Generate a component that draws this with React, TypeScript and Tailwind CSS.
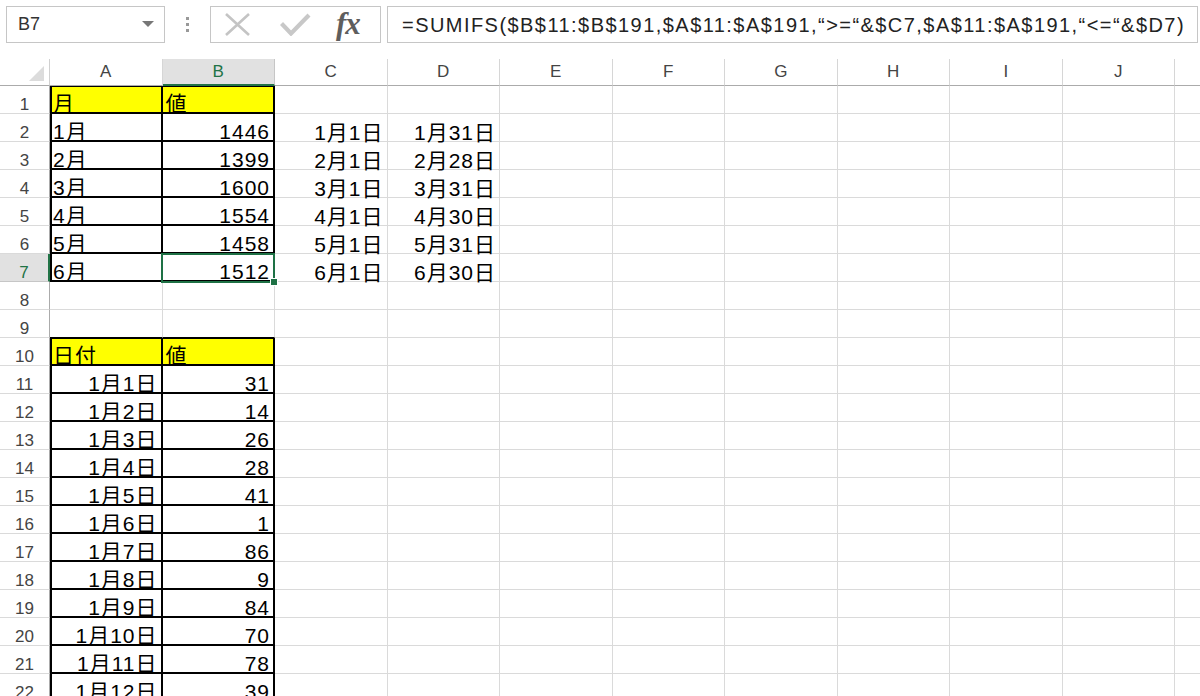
import React from 'react';

type Spec = { t?: string; right?: boolean; yellow?: boolean };

const months: [string, string, string, string][] = [
  ['1月', '1446', '1月1日', '1月31日'],
  ['2月', '1399', '2月1日', '2月28日'],
  ['3月', '1600', '3月1日', '3月31日'],
  ['4月', '1554', '4月1日', '4月30日'],
  ['5月', '1458', '5月1日', '5月31日'],
  ['6月', '1512', '6月1日', '6月30日'],
];
const daily = ['31', '14', '26', '28', '41', '1', '86', '9', '84', '70', '78', '39'];
const COLS = ['A', 'B', 'C', 'D', 'E', 'F', 'G', 'H', 'I', 'J', 'K'];

function spec(r: number, c: number): Spec {
  if (r === 1) {
    if (c === 0) return { t: '月', yellow: true };
    if (c === 1) return { t: '値', yellow: true };
  }
  if (r >= 2 && r <= 7) {
    const m = months[r - 2];
    if (c === 0) return { t: m[0] };
    if (c === 1) return { t: m[1], right: true };
    if (c === 2) return { t: m[2], right: true };
    if (c === 3) return { t: m[3], right: true };
  }
  if (r === 10) {
    if (c === 0) return { t: '日付', yellow: true };
    if (c === 1) return { t: '値', yellow: true };
  }
  if (r >= 11) {
    if (c === 0) return { t: `1月${r - 10}日`, right: true };
    if (c === 1) return { t: daily[r - 11], right: true };
  }
  return {};
}

function inTable(r: number, c: number) {
  return c <= 1 && ((r >= 1 && r <= 7) || r >= 10);
}

function cellClass(r: number, c: number, s: Spec) {
  const parts: string[] = [
    'relative flex items-end whitespace-nowrap pl-[3px] pr-[3px] leading-[16px] text-[21px] tracking-[1px] text-black',
  ];
  if (inTable(r, c)) {
    parts.push('border-r-2 border-b-2 border-black');
    const top = r === 1 || r === 10;
    if (c === 0 && top) parts.push('shadow-[inset_2px_1px_0_0_#000]');
    else if (c === 0) parts.push('shadow-[inset_2px_0_0_0_#000]');
    else if (top) parts.push('shadow-[inset_0_1px_0_0_#000]');
  } else if (r === 9 && c <= 1) {
    parts.push('border-r border-b border-r-[#dadada] border-b-black');
  } else {
    parts.push('border-r border-b border-[#dadada]');
  }
  if (s.yellow) parts.push('bg-[#ffff00]');
  if (s.right) parts.push('justify-end');
  return parts.join(' ');
}

export default function App() {
  const rows = Array.from({ length: 22 }, (_, i) => i + 1);
  return (
    <div className="w-[1200px] h-[696px] overflow-hidden bg-white font-['Liberation_Sans','Noto_Sans_CJK_JP',sans-serif]">
      {/* top bar */}
      <div className="flex items-start h-[59px] pt-[6px]">
        <div className="ml-[6px] w-[159px] h-[37px] border border-[#c6c6c6] flex items-center justify-between pl-[11px] pr-[10px]">
          <span className="text-[18px] text-[#333]">B7</span>
          <svg width="12" height="7" viewBox="0 0 12 7">
            <polygon points="0,0 12,0 6,6" fill="#777" />
          </svg>
        </div>
        <div className="ml-[21px] h-[37px] flex flex-col items-center justify-center gap-[3px]">
          <span className="block w-[3px] h-[3px] bg-[#999]" />
          <span className="block w-[3px] h-[3px] bg-[#999]" />
          <span className="block w-[3px] h-[3px] bg-[#999]" />
        </div>
        <div className="ml-[21px] w-[171px] h-[37px] border border-[#c6c6c6] flex items-center">
          <svg className="ml-[13px]" width="27" height="23" viewBox="0 0 27 23">
            <path d="M2 1 L25 22 M25 1 L2 22" stroke="#c4c4c4" strokeWidth="2.6" fill="none" />
          </svg>
          <svg className="ml-[29px]" width="31" height="23" viewBox="0 0 31 23">
            <path d="M1.5 10.5 L11 20.5 L29 2" stroke="#c8c8c8" strokeWidth="4.2" fill="none" />
          </svg>
          <span className="ml-[25px] font-['Liberation_Serif',serif] italic font-bold text-[31px] leading-none text-[#5e5e5e] tracking-[-1px] -mt-[3px]">
            fx
          </span>
        </div>
        <div className="ml-[6px] flex-1 mr-[2px] h-[37px] border border-[#c6c6c6] flex items-center pl-[14px] text-[20px] tracking-[1.45px] text-[#222] whitespace-nowrap overflow-hidden">
          =SUMIFS($B$11:$B$191,$A$11:$A$191,“&gt;=“&amp;$C7,$A$11:$A$191,“&lt;=“&amp;$D7)
        </div>
      </div>

      {/* sheet */}
      <div className="grid grid-cols-[50px_repeat(11,112.5px)] grid-rows-[27px_repeat(22,28px)]">
        <div className="flex items-end justify-end pr-[5px] pb-[4px] border-r border-b border-r-[#d0d0d0] border-b-[#ababab]">
          <svg width="15" height="15" viewBox="0 0 15 15">
            <polygon points="15,0 15,15 0,15" fill="#dcdcdc" />
          </svg>
        </div>
        {COLS.map((L, i) =>
          i === 1 ? (
            <div
              key={L}
              className="flex items-center justify-center text-[17px] text-[#217346] bg-[#e1e1e1] border-r border-r-[#c6c6c6] border-b-2 border-b-[#217346]"
            >
              {L}
            </div>
          ) : (
            <div
              key={L}
              className="flex items-center justify-center text-[17px] text-[#444] border-r border-r-[#d6d6d6] border-b border-b-[#ababab]"
            >
              {L}
            </div>
          )
        )}
        {rows.map((r) => (
          <React.Fragment key={r}>
            {r === 7 ? (
              <div className="flex items-end justify-center leading-[16px] text-[17px] text-[#217346] bg-[#e1e1e1] border-b border-b-[#c6c6c6] border-r-2 border-r-[#217346]">
                {r}
              </div>
            ) : (
              <div className="flex items-end justify-center leading-[16px] text-[17px] text-[#444] border-b border-b-[#dadada] border-r border-r-[#ababab]">
                {r}
              </div>
            )}
            {COLS.map((L, c) => {
              const s = spec(r, c);
              return (
                <div key={L} className={cellClass(r, c, s)}>
                  {s.t}
                  {r === 7 && c === 1 && (
                    <>
                      <div className="absolute z-10 -left-[2px] -top-[1px] -right-[2px] -bottom-[3px] border-[2.5px] border-[#1e7145] pointer-events-none" />
                      <div className="absolute z-20 -right-[5px] -bottom-[6px] w-[8px] h-[8px] bg-[#1e7145] border border-white" />
                    </>
                  )}
                </div>
              );
            })}
          </React.Fragment>
        ))}
      </div>
    </div>
  );
}
